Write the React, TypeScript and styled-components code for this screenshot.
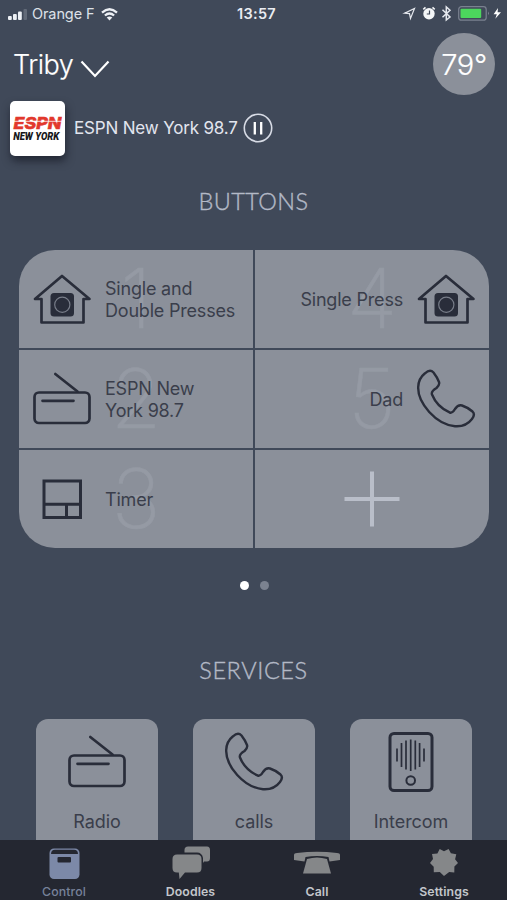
import React from "react";
import styled, { createGlobalStyle } from "styled-components";

const GlobalStyle = createGlobalStyle`
  * { box-sizing: border-box; }
  body { margin: 0; background: #404959; font-family: Inter, Roboto, sans-serif; }
`;

const INK = "#292d3a";

const Screen = styled.div`
  width: 507px;
  height: 900px;
  overflow: hidden;
  display: flex;
  flex-direction: column;
  background: #404959;
  color: #fff;
`;

const StatusBar = styled.header`
  height: 28px;
  flex: none;
  display: grid;
  grid-template-columns: 1fr auto 1fr;
  align-items: center;
  padding: 0 5px 0 8px;
  color: #e9ecf2;
`;

const StatusGroup = styled.div<{ $end?: boolean }>`
  display: flex;
  align-items: center;
  justify-content: ${(p) => (p.$end ? "flex-end" : "flex-start")};
`;

const Carrier = styled.span`
  font-size: 14.5px;
  line-height: 18px;
  margin: 0 7px 0 5px;
  letter-spacing: -0.1px;
  color: #dde1e8;
`;

const Clock = styled.span`
  font-size: 14.5px;
  line-height: 18px;
  font-weight: 600;
  letter-spacing: 0.3px;
  padding-left: 3px;
`;

const TopBar = styled.div`
  height: 72px;
  flex: none;
  display: flex;
  align-items: center;
  justify-content: space-between;
  padding: 2px 12px 0 13px;
`;

const DeviceName = styled.h1`
  margin: 0;
  display: flex;
  align-items: center;
  gap: 7px;
  font-size: 27px;
  line-height: 34px;
  font-weight: 300;
  letter-spacing: -0.45px;
  -webkit-text-stroke: 0.2px #fff;
  svg { margin-top: 8px; }
`;

const Temperature = styled.div`
  width: 62px;
  height: 62px;
  border-radius: 50%;
  background: #8b909a;
  display: flex;
  align-items: center;
  justify-content: center;
  font-size: 29px;
  font-weight: 300;
  letter-spacing: -0.4px;
  margin-top: -2px;
  -webkit-text-stroke: 0.2px #fff;
`;

const NowPlaying = styled.div`
  height: 56px;
  flex: none;
  display: flex;
  align-items: center;
  padding: 0 10px;
`;

const Artwork = styled.div`
  width: 55px;
  height: 55px;
  border-radius: 5px;
  background: #fff;
  box-shadow: 1px 5px 8px rgba(18, 22, 32, 0.65);
`;

const Station = styled.span`
  margin: 0 5px 0 9px;
  font-size: 17px;
  line-height: 22px;
  letter-spacing: -0.17px;
  color: #e2e5ee;
`;

const SectionTitle = styled.h2<{ $before: number; $after: number; $spacing: number }>`
  margin: ${(p) => p.$before}px 0 ${(p) => p.$after}px;
  flex: none;
  text-align: center;
  font-family: Lato, sans-serif;
  font-size: 23.5px;
  line-height: 28px;
  font-weight: 300;
  letter-spacing: ${(p) => p.$spacing}px;
  -webkit-text-stroke: 0.35px #b3b9c6;
  color: #b3b9c6;
`;

const ButtonGrid = styled.div`
  width: 470px;
  height: 298px;
  margin-left: 19px;
  flex: none;
  display: grid;
  grid-template-columns: 234px 234px;
  grid-template-rows: repeat(3, 1fr);
  gap: 2px;
  border-radius: 36px;
  overflow: hidden;
`;

const Cell = styled.div<{ $reverse?: boolean }>`
  position: relative;
  display: flex;
  flex-direction: ${(p) => (p.$reverse ? "row-reverse" : "row")};
  align-items: center;
  padding: 0 13px;
  gap: 13px;
  background: #8b909a;
`;

const AddCell = styled(Cell)`
  justify-content: center;
`;

const Digit = styled.span`
  position: absolute;
  left: 117px;
  top: 50%;
  transform: translate(-50%, -50%);
  font-size: 82px;
  line-height: 82px;
  font-weight: 200;
  color: #959aa4;
  -webkit-text-stroke: 0.5px #959aa4;
`;

const CellLabel = styled.span`
  position: relative;
  padding-top: 2px;
  font-size: 18px;
  line-height: 21.6px;
  color: #3a3e4b;
  white-space: pre-line;
  letter-spacing: -0.2px;
`;

const Pager = styled.div`
  display: flex;
  justify-content: center;
  gap: 11px;
  margin-top: 33px;
  padding-left: 2px;
  flex: none;
`;

const Dot = styled.span<{ $active?: boolean }>`
  width: 9px;
  height: 9px;
  border-radius: 50%;
  background: ${(p) => (p.$active ? "#fff" : "#7b8290")};
`;

const Services = styled.div`
  flex: 1;
  min-height: 0;
  display: flex;
  gap: 35px;
  padding-left: 36px;
`;

const ServiceCard = styled.div`
  width: 122px;
  flex: none;
  display: flex;
  flex-direction: column;
  align-items: center;
  padding-top: 13px;
  border-radius: 12px 12px 0 0;
  background: #8b909a;
  color: #3a3e4b;
  font-size: 18px;
  line-height: 22px;
  letter-spacing: -0.05px;
  gap: 19px;
`;

const TabBar = styled.nav`
  height: 60px;
  flex: none;
  display: grid;
  grid-template-columns: 128px 125px 128px 126px;
  background: #242731;
`;

const Tab = styled.div<{ $active?: boolean }>`
  display: flex;
  flex-direction: column;
  align-items: center;
  padding-top: 4px;
  gap: 4px;
  font-size: 12.3px;
  line-height: 16px;
  font-weight: ${(p) => (p.$active ? 500 : 600)};
  letter-spacing: 0.1px;
  color: ${(p) => (p.$active ? "#77829a" : "#c3c6cb")};
`;

const HouseIcon = () => (
  <svg width="60" height="60" viewBox="0 0 60 60" fill="none" stroke={INK} strokeWidth="2.7">
    <path d="M30 7 L57.5 30 H51.5 V53.5 H9.5 V30 H3 Z" strokeLinejoin="round" />
    <rect x="18.5" y="24" width="23.5" height="23.5" rx="3.5" fill={INK} stroke="none" />
    <circle cx="30.3" cy="35.7" r="7.6" stroke="#777c88" strokeWidth="1.2" />
  </svg>
);

const RadioIcon = () => (
  <svg width="60" height="60" viewBox="0 0 60 60" fill="none" stroke={INK} strokeWidth="2.7" strokeLinecap="round">
    <rect x="2.5" y="23.5" width="55" height="30.5" rx="4.5" />
    <path d="M23.3 5 L45.5 22.5 M10.5 31.8 H41.5" />
  </svg>
);

const PhoneIcon = () => (
  <svg width="60" height="60" viewBox="0 0 60 60" fill="none" stroke={INK} strokeWidth="2.4" strokeLinejoin="round">
    <path d="M9 4.300 Q14 -.2 17.500 3.500 Q21 8 23 13 Q24 16 20.500 19 Q14.800 22.500 16 25.500 Q21 38 34 43.700 Q36.500 44.200 39 40 Q42 35.500 46 36.500 Q52 38.500 56.500 42.500 Q59.500 45.500 56 50 Q50 58 39 57.200 C20 55.500 1.500 34 2.200 18 Q2.500 9.500 9 4.300 Z" />
  </svg>
);

const TimerIcon = () => (
  <svg width="60" height="60" viewBox="0 0 60 60" fill="none" stroke={INK} strokeWidth="3">
    <rect x="12" y="12" width="36.500" height="36.500" />
    <path d="M12 35.300 H48 M34.500 35.300 V48.500" />
  </svg>
);

const IntercomIcon = () => (
  <svg width="60" height="60" viewBox="0 0 60 60" fill="none" stroke={INK}>
    <rect x="9" y="1.500" width="42" height="57" rx="4" strokeWidth="3" />
    <path d="M16 16.500V29.500M20.500 11V35M25 8.500V37.500M29.700 7.500V39M34.300 8.500V37.500M38.600 11V35M43 16.500V29.500" strokeWidth="1.700" />
    <circle cx="29.700" cy="48.500" r="4.300" strokeWidth="2" />
  </svg>
);

const SignalIcon = () => (
  <svg width="19" height="12" viewBox="0 0 19 12" fill="#edf0f5">
    <rect x="0" y="8" width="3.800" height="4" rx="1" />
    <rect x="5" y="6" width="3.800" height="6" rx="1" />
    <rect x="10" y="3.500" width="3.800" height="8.500" rx="1" />
    <rect x="15.500" y="1" width="3.500" height="11" rx="1" fill="#626a78" />
  </svg>
);

const WifiIcon = () => (
  <svg width="17" height="13" viewBox="0 0 17 13" fill="none" stroke="#edf0f5" strokeWidth="2.300">
    <path d="M1 4.600 Q8.500 -2 16 4.600" />
    <path d="M3.900 7.500 Q8.500 3.500 13.100 7.500" />
    <path d="M8.500 12.500 L5.700 9.600 Q8.500 7.400 11.300 9.600 Z" fill="#edf0f5" stroke="none" />
  </svg>
);

const StatusIcons = () => (
  <svg width="100" height="18" viewBox="402 5 100 18" fill="none">
    <path d="M404.500 13.200 L414.500 8.500 L410.500 18.500 L409.500 13.600 Z" stroke="#e5e8ee" strokeWidth="1.200" />
    <circle cx="429" cy="13.800" r="5.700" fill="#f4f6f8" />
    <path d="M423.300 9.300 L425.500 7.400 M434.700 9.300 L432.500 7.400" stroke="#f4f6f8" strokeWidth="1.600" />
    <path d="M429.500 10.500 V14 H426.800" stroke="#404959" strokeWidth="1.200" />
    <path d="M442.500 9.800 L450 17 L446.300 20 V7 L450 10.200 L442.500 17.300" stroke="#e5e8ee" strokeWidth="1.500" />
    <rect x="458.700" y="6.700" width="27.500" height="13.500" rx="2.800" stroke="#7a8190" strokeWidth="1.200" />
    <rect x="460.500" y="8.700" width="20.700" height="9.400" rx="1" fill="#4cd65d" />
    <path d="M488 11.500 Q489.800 13.300 488 15.300 Z" fill="#8a909d" />
    <path d="M498 8 L493.600 14.200 H496.800 L495.300 18.800 L501 12.300 H497.600 Z" fill="#fff" />
  </svg>
);

const EspnLogo = () => (
  <svg width="55" height="55" viewBox="0 0 55 55">
    <text x="3.500" y="28.300" fontFamily="Inter, sans-serif" fontWeight="800" fontStyle="italic" fontSize="15.500" fill="#e2382c" stroke="#e2382c" strokeWidth="0.500" textLength="48" lengthAdjust="spacingAndGlyphs">ESPN</text>
    <path d="M4 20.300 H52" stroke="#fff" strokeWidth=".8" />
    <text x="3.200" y="38.600" fontFamily="Roboto, sans-serif" fontWeight="900" fontStyle="italic" fontSize="11.300" fill="#17171a" textLength="46" lengthAdjust="spacingAndGlyphs">NEW YORK</text>
  </svg>
);

const PauseIcon = () => (
  <svg width="30" height="30" viewBox="0 0 30 30" fill="none">
    <circle cx="15" cy="15" r="13.700" stroke="#d7dbe5" strokeWidth="1.600" />
    <path d="M11.800 9 V21.500 M18.200 9 V21.500" stroke="#fff" strokeWidth="2.300" />
  </svg>
);

const ControlIcon = () => (
  <svg width="40" height="36" viewBox="0 0 40 36">
    <rect x="5.500" y="4.500" width="30" height="30.500" rx="4.500" fill="#7c89a8" />
    <path d="M7 10 Q7.200 5.800 11 5.800 H30 Q33.800 5.800 34 10 Z" fill="#242731" />
    <rect x="13.500" y="13" width="13.500" height="5.500" rx="1" fill="#242731" />
  </svg>
);

const DoodlesIcon = () => (
  <svg width="40" height="36" viewBox="0 0 40 36" fill="#858789">
    <path d="M17 2.500 H36 Q39 2.500 39 6 V14 Q39 17.500 36 17.500 H33 V19 L32 17.500 V14 Q31 8.500 26 8.500 H13.500 V6 Q13.500 2.500 17 2.500 Z" />
    <path d="M6 10.500 H26 Q30.500 10.500 30.500 15 V24 Q30.500 28.500 26 28.500 H14 L8.500 35 L7.800 28.500 H6 Q1.500 28.500 1.500 24 V15 Q1.500 10.500 6 10.500 Z" />
  </svg>
);

const CallIcon = () => (
  <svg width="48" height="36" viewBox="0 0 48 36" fill="#858789">
    <path d="M1 11 Q1 9 4 9 Q24 6.500 44 9 Q47 9 47 11 V16 L36.500 17.500 L35.500 13 Q24 11 12.500 13 L11.500 17.500 L1 16 Z" />
    <path d="M14 15 Q24 12 34 15 L38 29.500 H10 Z" />
  </svg>
);

const SettingsIcon = () => (
  <svg width="36" height="36" viewBox="0 0 36 36" fill="#858789">
    <path d="M18 7.200 L22.600 5 L24.900 9.200 L30.300 10.300 L29.100 15.200 L32 19 L28.400 22.600 L28.300 28.500 L23.200 28 L18 32 L13.800 28.100 L7.800 28.300 L7.700 22.800 L4 19 L7 15 L6 9.900 L11.400 9.400 L13.700 5 Z" />
  </svg>
);

const buttons = [
  { digit: "1", label: "Single and\nDouble Presses", icon: <HouseIcon /> },
  { digit: "4", label: "Single Press", icon: <HouseIcon />, reverse: true },
  { digit: "2", label: "ESPN New\nYork 98.7", icon: <RadioIcon /> },
  { digit: "5", label: "Dad", icon: <PhoneIcon />, reverse: true },
  { digit: "3", label: "Timer", icon: <TimerIcon /> },
];

const services = [
  { label: "Radio", icon: <RadioIcon /> },
  { label: "calls", icon: <PhoneIcon /> },
  { label: "Intercom", icon: <IntercomIcon /> },
];

const tabs = [
  { label: "Control", icon: <ControlIcon />, active: true },
  { label: "Doodles", icon: <DoodlesIcon /> },
  { label: "Call", icon: <CallIcon /> },
  { label: "Settings", icon: <SettingsIcon /> },
];

export default function App() {
  return (
    <Screen>
      <GlobalStyle />
      <StatusBar>
        <StatusGroup>
          <SignalIcon />
          <Carrier>Orange F</Carrier>
          <WifiIcon />
        </StatusGroup>
        <Clock>13:57</Clock>
        <StatusGroup $end>
          <StatusIcons />
        </StatusGroup>
      </StatusBar>
      <TopBar>
        <DeviceName>
          Triby
          <svg width="30" height="18" viewBox="0 0 30 18" fill="none" stroke="#fff" strokeWidth="2.200">
            <path d="M1.500 1.500 L15 16 L28.500 1.500" />
          </svg>
        </DeviceName>
        <Temperature>79°</Temperature>
      </TopBar>
      <NowPlaying>
        <Artwork><EspnLogo /></Artwork>
        <Station>ESPN New York 98.7</Station>
        <PauseIcon />
      </NowPlaying>
      <SectionTitle $before={31} $after={35} $spacing={0.4}>BUTTONS</SectionTitle>
      <ButtonGrid>
        {buttons.map((b) => (
          <Cell key={b.digit} $reverse={b.reverse}>
            <Digit>{b.digit}</Digit>
            {b.icon}
            <CellLabel>{b.label}</CellLabel>
          </Cell>
        ))}
        <AddCell>
          <svg width="56" height="56" viewBox="0 0 56 56" stroke="#b9bec9" strokeWidth="4">
            <path d="M28 .5 V55.500 M.5 28 H55.500" />
          </svg>
        </AddCell>
      </ButtonGrid>
      <Pager>
        <Dot $active />
        <Dot />
      </Pager>
      <SectionTitle $before={66} $after={35} $spacing={0.6}>SERVICES</SectionTitle>
      <Services>
        {services.map((s) => (
          <ServiceCard key={s.label}>
            {s.icon}
            {s.label}
          </ServiceCard>
        ))}
      </Services>
      <TabBar>
        {tabs.map((t) => (
          <Tab key={t.label} $active={t.active}>
            {t.icon}
            {t.label}
          </Tab>
        ))}
      </TabBar>
    </Screen>
  );
}
